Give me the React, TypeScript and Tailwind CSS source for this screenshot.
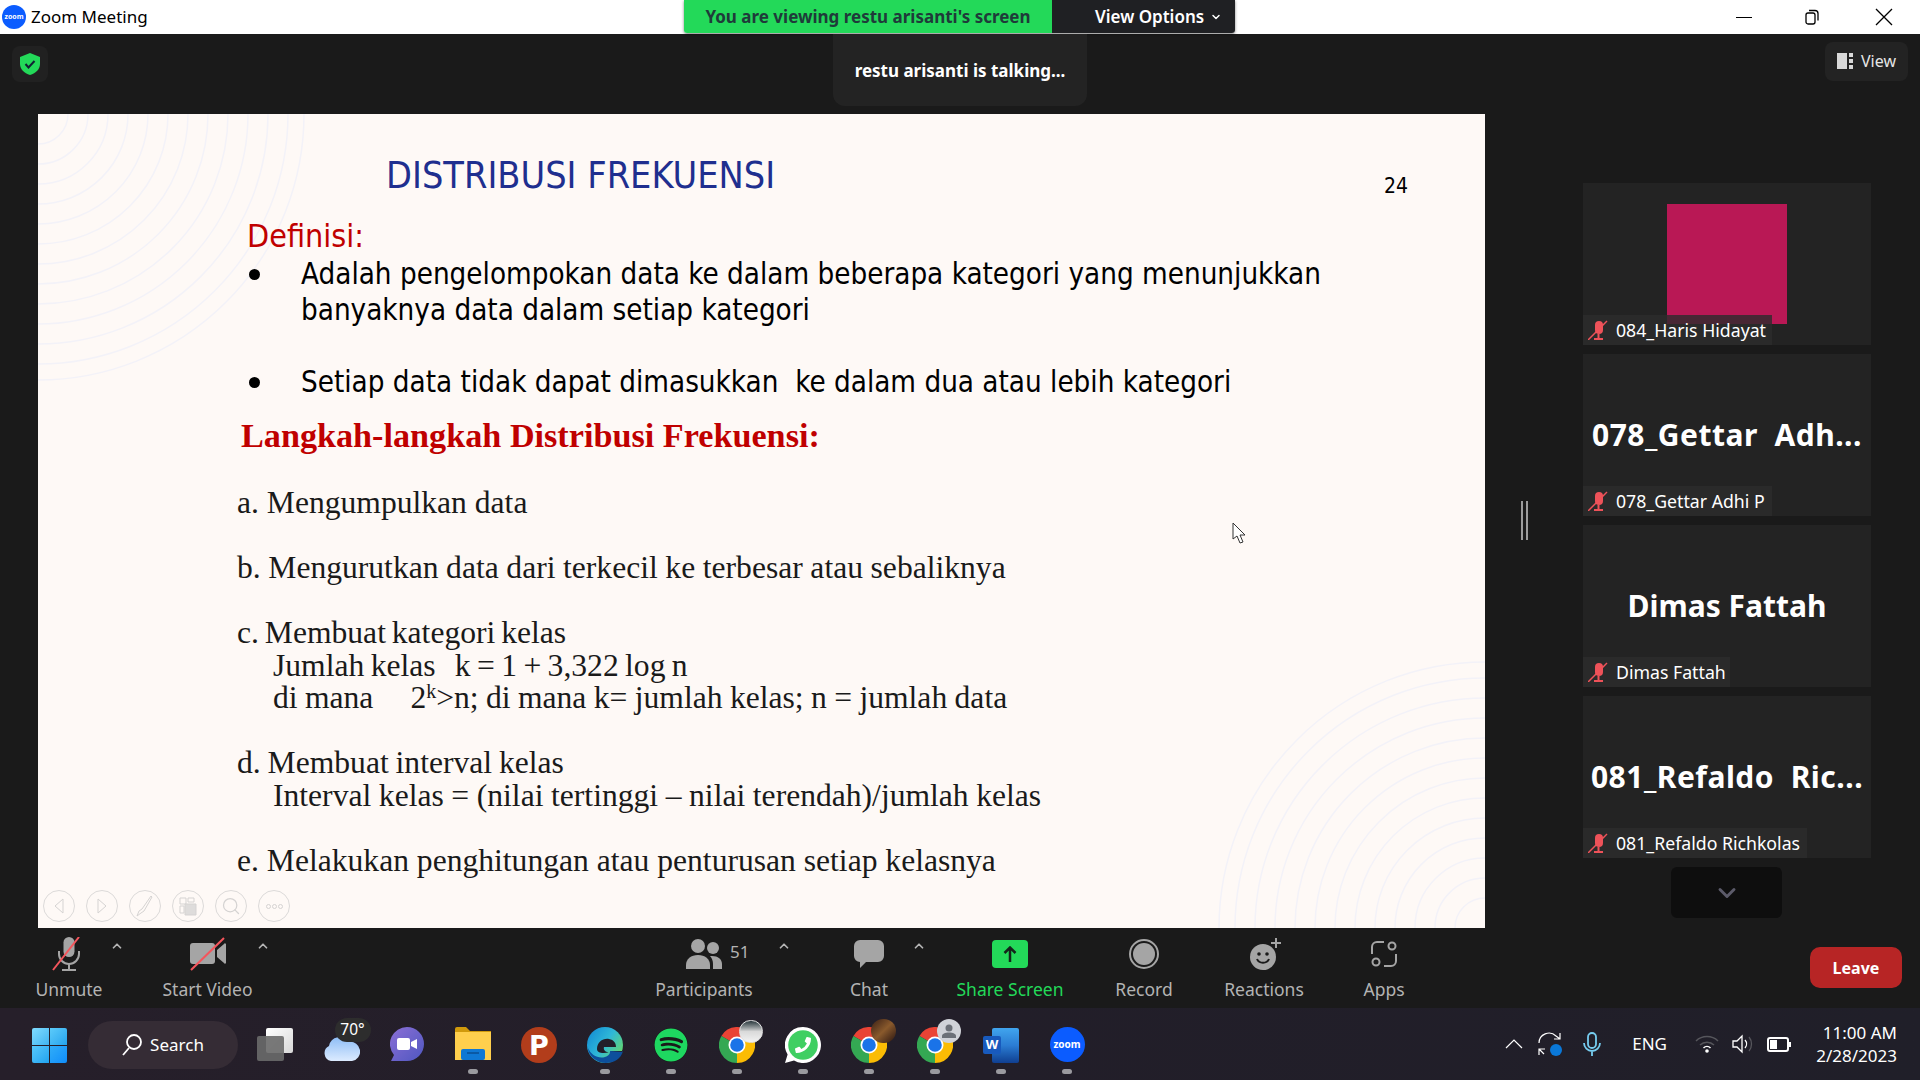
import React from "react";
import { FaSpotify, FaPhoneAlt } from "react-icons/fa";
import { ChevronDown, ChevronUp, Search } from "lucide-react";

const GRAY = "#a5a5a5";
const RED = "#f4555c";

const MutedMic = ({ size = 34 }: { size?: number }) => (
  <svg width={size} height={size} viewBox="0 0 34 34" fill="none">
    <rect x="11.5" y="0" width="11" height="20" rx="5.5" fill={GRAY} />
    <path d="M7 14v3a10 10 0 0 0 20 0v-3" stroke={GRAY} strokeWidth="2" />
    <path d="M17 27v5M10 33h14" stroke={GRAY} strokeWidth="2" />
    <path d="M1 33 27 0" stroke={RED} strokeWidth="2" />
  </svg>
);

const MutedVideo = () => (
  <svg width="36" height="34" viewBox="0 0 36 34" fill="none">
    <path d="M3 6h19a3 3 0 0 1 3 3v15a3 3 0 0 1-3 3H3a3 3 0 0 1-3-3V9a3 3 0 0 1 3-3Z" fill={GRAY} />
    <path d="m27 13 7-6a1 1 0 0 1 2 1v17a1 1 0 0 1-2 1l-7-6Z" fill={GRAY} />
    <path d="M1 33 34 1" stroke={RED} strokeWidth="2" />
  </svg>
);

const Caret = () => <ChevronUp size={14} strokeWidth={3} color="#b4b4b4" />;

const ToolItem = ({
  label,
  className,
  green,
  children,
}: {
  label: string;
  className: string;
  green?: boolean;
  children: React.ReactNode;
}) => (
  <div className={`relative flex flex-col items-center pt-[9px] ${className}`}>
    <div className="h-[34px] flex items-center justify-center">{children}</div>
    <div className={`mt-[6px] text-[17.5px] leading-6 whitespace-nowrap ${green ? "text-[#23d959]" : "text-[#b3b3b3]"}`}>
      {label}
    </div>
  </div>
);

const Tile = ({ big, name, labelW, wide }: { big?: string; name: string; labelW: string; wide?: boolean }) => (
  <div className="relative h-[162px] w-[288px] bg-[#232323] flex items-center justify-center">
    {big ? (
      <span className={`text-[30px] font-bold text-white whitespace-pre leading-none ${wide ? "tracking-[0.5px]" : ""}`}>
        {big}
      </span>
    ) : (
      <div className="h-[120px] w-[120px] bg-[#b91855]" />
    )}
    <div className={`absolute left-0 bottom-0 h-[30px] flex items-center bg-[#2c2c2c]/80 ${labelW}`}>
      <svg className="ml-[5px] shrink-0" width="20" height="20" viewBox="0 0 20 20" fill="none">
        <rect x="7" y="1" width="8" height="13" rx="4" fill="#ee5259" />
        <path d="M6 19h9M10.500 14v5" stroke="#ee5259" strokeWidth="2" />
        <path d="M0 20 19 1" stroke="#ee5259" strokeWidth="1.500" />
      </svg>
      <span className="ml-[8px] text-[17.700px] text-white whitespace-nowrap">{name}</span>
    </div>
  </div>
);

const Chrome = () => (
  <svg width="36" height="36" viewBox="0 0 36 36">
    <path d="M18 18 2.400 9A18 18 0 0 1 33.600 9Z" fill="#ea4335" />
    <path d="M18 18 33.600 9A18 18 0 0 1 18 36Z" fill="#fbbc04" />
    <path d="M18 18 18 36A18 18 0 0 1 2.400 9Z" fill="#34a853" />
    <circle cx="18" cy="18" r="8.500" fill="#fff" />
    <circle cx="18" cy="18" r="6.800" fill="#1a73e8" />
  </svg>
);

const TaskIcon = ({ children, dot = true }: { children: React.ReactNode; dot?: boolean }) => (
  <div className="relative w-[66px] h-[72px] flex justify-center pt-[19px]">
    {children}
    {dot && <div className="absolute top-[61px] left-[28px] w-[10px] h-[5px] rounded-full bg-[#9a9a9f]" />}
  </div>
);

const SlideBtn = ({ children }: { children?: React.ReactNode }) => (
  <div className="w-[32px] h-[32px] rounded-full border border-[#dcdad9] flex items-center justify-center text-[#d5d3d2]">
    {children}
  </div>
);

const Arcs = ({ className }: { className: string }) => (
  <svg className={className} width="270" height="270" viewBox="0 0 270 270" fill="none" stroke="#f3f2f8" strokeWidth="1.500">
    {[30, 50, 70, 90, 110, 130, 150, 170, 190, 210, 230, 250, 266].map((r) => (
      <circle key={r} cx="0" cy="0" r={r} />
    ))}
  </svg>
);

const sans = "font-['DejaVu_Sans_Condensed','DejaVu_Sans',sans-serif]";
const serif = "font-['Liberation_Serif',serif]";

const Line = ({ className, children }: { className: string; children: React.ReactNode }) => (
  <p className={`${serif} text-[31.600px] leading-[32px] h-[32px] text-[#1a1a1a] whitespace-pre ${className}`}>{children}</p>
);

const Slide = () => (
  <div className="relative w-[1447px] h-[814px] bg-[#fef9f6] overflow-hidden">
    <Arcs className="absolute left-0 top-0" />
    <Arcs className="absolute right-0 bottom-0 rotate-180" />
    <div className="relative pl-[199px]">
      <h1 className={`${sans} ml-[149px] mt-[41px] text-[37.500px] leading-10 h-10 text-[#1f2f8f]`}>DISTRIBUSI FREKUENSI</h1>
      <p className={`${sans} ml-[10px] mt-[21px] text-[32px] leading-10 h-10 text-[#c00000]`}>Definisi:</p>
      <ul className={`${sans} text-[29.300px] leading-[36px] text-black`}>
        <li className="relative pl-[64px]">
          <span className="absolute left-[12px] top-[13px] w-[11px] h-[11px] rounded-full bg-black" />
          Adalah pengelompokan data ke dalam beberapa kategori yang menunjukkan
          <br />
          banyaknya data dalam setiap kategori
        </li>
        <li className="relative pl-[64px] mt-[36px] whitespace-pre">
          <span className="absolute left-[12px] top-[13px] w-[11px] h-[11px] rounded-full bg-black" />
          Setiap data tidak dapat dimasukkan  ke dalam dua atau lebih kategori
        </li>
      </ul>
      <h2 className={`${serif} ml-[4px] mt-[16px] text-[34.200px] leading-10 h-10 font-bold text-[#c00000]`}>
        Langkah-langkah Distribusi Frekuensi:
      </h2>
      <Line className="mt-[31px]">a. Mengumpulkan data</Line>
      <Line className="mt-[33px] [word-spacing:-0.3px]">b. Mengurutkan data dari terkecil ke terbesar atau sebaliknya</Line>
      <Line className="mt-[33px] [word-spacing:-2px]">c. Membuat kategori kelas</Line>
      <Line className="mt-[1px] ml-[36px] [word-spacing:-1.500px]">Jumlah kelas   k = 1 + 3,322 log n</Line>
      <Line className="ml-[36px] [word-spacing:-0.500px]">
        di mana     2<sup className="text-[20px]">k</sup>&gt;n; di mana k= jumlah kelas; n = jumlah data
      </Line>
      <Line className="mt-[33px] [word-spacing:-1px]">d. Membuat interval kelas</Line>
      <Line className="mt-[1px] ml-[36px] [word-spacing:-0.300px]">Interval kelas = (nilai tertinggi – nilai terendah)/jumlah kelas</Line>
      <Line className="mt-[33px]">e. Melakukan penghitungan atau penturusan setiap kelasnya</Line>
    </div>
    <span className={`${sans} absolute left-[1346px] top-[60px] text-[21px] leading-6 text-black`}>24</span>
    {/* slide show controls */}
    <div className="absolute left-[5px] top-[776px] flex gap-[11px]">
      <SlideBtn>
        <svg width="10" height="16" viewBox="0 0 10 16" fill="none" stroke="currentColor"><path d="M9 1 1 8l8 7Z" /></svg>
      </SlideBtn>
      <SlideBtn>
        <svg width="10" height="16" viewBox="0 0 10 16" fill="none" stroke="currentColor"><path d="m1 1 8 7-8 7Z" /></svg>
      </SlideBtn>
      <SlideBtn>
        <svg width="20" height="22" viewBox="0 0 20 22" fill="none" stroke="currentColor"><path d="M16 1 7 14l-3 2-2 5 4-3 3-2 8-14Z" /></svg>
      </SlideBtn>
      <SlideBtn>
        <svg width="20" height="20" viewBox="0 0 20 20" fill="none" stroke="currentColor"><path d="M2 2h6v6H2zM10 2h6v4h-6zM2 10h4v7H2z" /><path d="M7 8h11v11H7z" fill="#dedcdb" /></svg>
      </SlideBtn>
      <SlideBtn>
        <Search size={20} strokeWidth={1.500} />
      </SlideBtn>
      <SlideBtn>
        <span className="flex gap-px">
          <i className="w-[5px] h-[5px] rounded-full border border-current" />
          <i className="w-[5px] h-[5px] rounded-full border border-current" />
          <i className="w-[5px] h-[5px] rounded-full border border-current" />
        </span>
      </SlideBtn>
    </div>
    {/* mouse cursor */}
    <svg className="absolute left-[1194px] top-[408px]" width="14" height="22" viewBox="0 0 14 22">
      <path d="M1 1v16l4-3 3 7 3-1-3-7h5Z" fill="#fff" stroke="#333" />
    </svg>
  </div>
);

export default function App() {
  return (
    <div className="relative flex flex-col h-screen w-[1920px] overflow-hidden bg-[#1a1a1a] font-['Noto_Sans',sans-serif]">
      {/* Title bar */}
      <div className="flex h-[34px] bg-white shrink-0">
        <div className="w-[684px] flex items-center">
          <div className="ml-[2px] w-[24px] h-[24px] rounded-full bg-[#0b5cff] flex items-center justify-center text-[7px] font-bold text-white">
            zoom
          </div>
          <span className="ml-[5px] text-[17px] text-black">Zoom Meeting</span>
        </div>
        <div className="flex h-[33px] rounded-b-[3px] overflow-hidden shadow-[0_1px_3px_rgba(0,0,0,0.5)]">
          <div className="w-[368px] bg-[#23d959] flex items-center justify-center text-[17px] font-bold text-[#1f3b3a]">
            You are viewing restu arisanti's screen
          </div>
          <div className="w-[183px] bg-[#1f2023] flex items-center pl-[43px] text-[17px] font-semibold text-white">
            View Options
            <ChevronDown size={12} strokeWidth={3} className="ml-[6px]" />
          </div>
        </div>
        <div className="ml-auto mr-[27px] flex items-center">
          <div className="w-[16px] h-px bg-black" />
          <svg className="ml-[53px]" width="15" height="16" viewBox="0 0 15 16" fill="none" stroke="#000" strokeWidth="1.300">
            <rect x="1" y="4" width="9" height="11" rx="2" />
            <path d="M4 1.500h6a3 3 0 0 1 3 3v7" />
          </svg>
          <svg className="ml-[55px]" width="18" height="18" viewBox="0 0 18 18" stroke="#000" strokeWidth="1.300">
            <path d="m1 1 16 16M17 1 1 17" />
          </svg>
        </div>
      </div>

      {/* Main area */}
      <div className="relative flex flex-1 min-h-0">
        <div className="ml-[38px] mt-[80px]">
          <Slide />
        </div>
        <div className="ml-[36px] mt-[467px] h-[39px] w-[7px] flex justify-between self-start">
          <div className="w-[2px] bg-[#9c9c9c]" />
          <div className="w-[2px] bg-[#9c9c9c]" />
        </div>
        <div className="ml-[55px] mt-[149px] flex flex-col gap-[9px]">
          <Tile name="084_Haris Hidayat" labelW="w-[189px]" />
          <Tile big="078_Gettar  Adh..." wide name="078_Gettar Adhi P" labelW="w-[189px]" />
          <Tile big="Dimas Fattah" name="Dimas Fattah" labelW="w-[147px]" />
          <Tile big="081_Refaldo  Ric..." wide name="081_Refaldo Richkolas" labelW="w-[224px]" />
          <div className="ml-[88px] w-[111px] h-[51px] rounded-md bg-[#0e0e0e] flex items-center justify-center">
            <ChevronDown size={28} strokeWidth={2.500} color="#5c5b6a" />
          </div>
        </div>

        {/* Overlays */}
        <div className="absolute left-[12px] top-[12px] w-[36px] h-[36px] rounded-lg bg-[#212121] flex items-center justify-center">
          <svg width="20" height="22" viewBox="0 0 20 22">
            <path d="M10 0 20 4v7c0 5-4 9-10 11C4 20 0 16 0 11V4Z" fill="#23d959" />
            <path d="m5.500 11 3 3.500 6-6.500" fill="none" stroke="#123" strokeWidth="2" />
          </svg>
        </div>
        <div className="absolute left-[833px] top-0 w-[254px] h-[72px] pt-px rounded-b-xl bg-[#232323] flex items-center justify-center text-[17px] font-bold text-white">
          restu arisanti is talking...
        </div>
        <div className="absolute left-[1825px] top-[8px] w-[83px] h-[39px] pb-px rounded-lg bg-[#232323] flex items-center justify-center text-[16px] text-[#e6e6e6]">
          <svg className="mr-[8px]" width="16" height="16" viewBox="0 0 16 16" fill="#d9d9d9">
            <path d="M0 0h10v16H0zM12 0h4v4h-4zM12 6h4v4h-4zM12 12h4v4h-4z" />
          </svg>
          View
        </div>
      </div>

      {/* Meeting toolbar */}
      <div className="flex h-[80px] shrink-0 bg-[#1a1a1a]">
        <ToolItem label="Unmute" className="w-[138px]">
          <MutedMic />
          <span className="absolute left-[110px] top-[11px]"><Caret /></span>
        </ToolItem>
        <ToolItem label="Start Video" className="w-[139px]">
          <MutedVideo />
          <span className="absolute left-[118px] top-[11px]"><Caret /></span>
        </ToolItem>
        <ToolItem label="Participants" className="w-[140px] ml-[357px]">
          <svg width="36" height="30" viewBox="0 0 36 30" fill={GRAY}>
            <circle cx="12" cy="7" r="7" />
            <path d="M0 30v-4c0-6 5-10 12-10s12 4 12 10v4Z" />
            <circle cx="27" cy="9" r="6" />
            <path d="M26 17c6 0 10 3 10 8v5h-9v-5c0-3-1-6-3-8Z" />
          </svg>
          <span className="absolute left-[96px] top-[11px] text-[17px] text-[#b3b3b3]">51</span>
          <span className="absolute left-[143px] top-[11px]"><Caret /></span>
        </ToolItem>
        <ToolItem label="Chat" className="w-[150px] ml-[20px]">
          <svg width="30" height="28" viewBox="0 0 30 28" fill={GRAY}>
            <path d="M6 0h18a6 6 0 0 1 6 6v10a6 6 0 0 1-6 6H12l-6 6v-6a6 6 0 0 1-6-6V6a6 6 0 0 1 6-6Z" />
          </svg>
          <span className="absolute left-[118px] top-[11px]"><Caret /></span>
        </ToolItem>
        <ToolItem label="Share Screen" green className="w-[130px] ml-px">
          <div className="w-[36px] h-[28px] rounded-[4px] bg-[#23d959] flex items-center justify-center">
            <svg width="14" height="16" viewBox="0 0 14 16" fill="none" stroke="#14241b" strokeWidth="2.500">
              <path d="M7 16V2M1.500 7 7 1.500 12.500 7" />
            </svg>
          </div>
        </ToolItem>
        <ToolItem label="Record" className="w-[130px] ml-[4px]">
          <svg width="30" height="30" viewBox="0 0 30 30">
            <circle cx="15" cy="15" r="14" fill="none" stroke={GRAY} strokeWidth="2" />
            <circle cx="15" cy="15" r="11" fill={GRAY} />
          </svg>
        </ToolItem>
        <ToolItem label="Reactions" className="w-[110px]">
          <svg className="ml-[3px]" width="32" height="32" viewBox="0 0 32 32">
            <circle cx="13" cy="19" r="13" fill={GRAY} />
            <circle cx="9" cy="16" r="1.800" fill="#1a1a1a" />
            <circle cx="17" cy="16" r="1.800" fill="#1a1a1a" />
            <path d="M7 21c2 5 10 5 12 0" fill="none" stroke="#1a1a1a" strokeWidth="2" />
            <path d="M26 0v10M21 5h10" stroke={GRAY} strokeWidth="2" />
          </svg>
        </ToolItem>
        <ToolItem label="Apps" className="w-[130px]">
          <svg width="26" height="26" viewBox="0 0 26 26" fill="none" stroke={GRAY} strokeWidth="2">
            <path d="M1 13V6a5 5 0 0 1 5-5h7M25 13v7a5 5 0 0 1-5 5h-7" />
            <circle cx="21" cy="5" r="3.500" />
            <circle cx="5" cy="21" r="3.500" />
          </svg>
        </ToolItem>
        <div className="ml-auto mr-[18px] mt-[19px] w-[92px] h-[41px] rounded-[10px] bg-[#b72525] flex items-center justify-center text-[16px] font-bold text-white">
          Leave
        </div>
      </div>

      {/* Windows taskbar */}
      <div className="flex h-[72px] shrink-0 bg-gradient-to-r from-[#261f2a] via-[#221e29] to-[#201f29] text-white">
        <div className="ml-[32px] mt-[20px] w-[35px] h-[35px] grid grid-cols-2 gap-[1.500px]">
          <div className="bg-gradient-to-br from-[#7fdcff] to-[#3fb4f0] rounded-tl-[2px]" />
          <div className="bg-gradient-to-br from-[#5ccbfa] to-[#22a4ee] rounded-tr-[2px]" />
          <div className="bg-gradient-to-br from-[#55c8fb] to-[#1fa3f0] rounded-bl-[2px]" />
          <div className="bg-gradient-to-br from-[#30adf8] to-[#0f8dfa] rounded-br-[2px]" />
        </div>
        <div className="ml-[21px] mt-[13px] w-[150px] h-[48px] rounded-full bg-[#352c35] flex items-center justify-center text-[17px]">
          <svg className="mr-[8px]" width="20" height="22" viewBox="0 0 20 22" fill="none" stroke="#fff" strokeWidth="1.800">
            <circle cx="12" cy="8" r="7" />
            <path d="M7 14 1 21" />
          </svg>
          Search
        </div>
        <div className="ml-[4px] flex">
          <TaskIcon dot={false}>
            <div className="relative w-[36px] h-[33px] mt-[1px]">
              <div className="absolute right-0 top-0 w-[27px] h-[25px] rounded-[2px] bg-gradient-to-br from-white to-[#d8d8d8]" />
              <div className="absolute left-0 bottom-0 w-[27px] h-[25px] rounded-[2px] bg-[#6a6a6a]/90" />
            </div>
          </TaskIcon>
          <TaskIcon dot={false}>
            <div className="relative w-[37px] h-[36px]">
              <svg className="absolute left-0 top-[8px]" width="37" height="26" viewBox="0 0 37 26">
                <defs>
                  <linearGradient id="cl" x1="0" y1="0" x2="0" y2="1">
                    <stop offset="0" stopColor="#8ebdf5" />
                    <stop offset="1" stopColor="#dcebff" />
                  </linearGradient>
                </defs>
                <path d="M8 26a8 8 0 0 1-2-15 11 11 0 0 1 20-4 9 9 0 0 1 3 19Z" fill="url(#cl)" />
              </svg>
              <div className="absolute left-[12px] -top-[9px] w-[36px] h-[24px] rounded-full bg-[#2d2d2d] flex items-center justify-center text-[15.500px]">
                70°
              </div>
            </div>
          </TaskIcon>
          <TaskIcon dot={false}>
            <svg width="34" height="35" viewBox="0 0 34 35">
              <defs>
                <linearGradient id="tm" x1="0" y1="0" x2="1" y2="1">
                  <stop offset="0" stopColor="#8b6fd6" />
                  <stop offset="1" stopColor="#4f57c0" />
                </linearGradient>
              </defs>
              <path d="M17 0a17 17 0 1 1 0 34H1l3-6A17 17 0 0 1 17 0Z" fill="url(#tm)" />
              <rect x="7" y="11" width="13" height="12" rx="2" fill="#fff" />
              <path d="m21 15 6-3v10l-6-3Z" fill="#fff" />
            </svg>
          </TaskIcon>
          <TaskIcon>
            <svg width="36" height="33" viewBox="0 0 36 33">
              <path d="M0 2a2 2 0 0 1 2-2h9l4 4h21v6H0Z" fill="#d19a0c" />
              <path d="M0 5h36v28H0Z" fill="#ffcf4d" />
              <rect x="6" y="22" width="24" height="11" rx="2" fill="#0f78d4" />
              <path d="M12 26h12" stroke="#0a4f95" strokeWidth="1.500" />
            </svg>
          </TaskIcon>
          <TaskIcon dot={false}>
            <div className="w-[36px] h-[36px] rounded-full bg-[#b23d1b] flex items-center justify-center text-[27px] leading-none font-bold text-white font-['DejaVu_Sans',sans-serif]">
              P
            </div>
          </TaskIcon>
          <TaskIcon>
            <svg width="36" height="36" viewBox="0 0 36 36">
              <defs>
                <linearGradient id="ed" x1="0" y1="0" x2="1" y2="0.700">
                  <stop offset="0" stopColor="#0f86d4" />
                  <stop offset="0.550" stopColor="#2fb8d8" />
                  <stop offset="1" stopColor="#66d86a" />
                </linearGradient>
              </defs>
              <circle cx="18" cy="18" r="18" fill="url(#ed)" />
              <path d="M36 24c-2 8-9 12-17 12C9 36 1 28 1 21c3 7 10 11 17 9 6-2 5-6 5-6h13Z" fill="#0d4f9c" />
              <path d="M10 22c0-7 6-11 12-10 5 1 7 4 7 8H17c-1 3 2 6 6 5l13-1-1 1H23c-7 2-13 1-13-3Z" fill="#221e29" />
            </svg>
          </TaskIcon>
          <TaskIcon>
            <FaSpotify size={34} color="#1ed760" className="rounded-full bg-[#1a1a1a] mt-[1px]" />
          </TaskIcon>
          <TaskIcon>
            <div className="relative">
              <Chrome />
              <div className="absolute left-[20px] -top-[7px] w-[24px] h-[23px] rounded-full bg-gradient-to-b from-[#2c3a3f] via-[#d9d9d9] to-[#f2f2f2] border border-[#e2e2e2]" />
            </div>
          </TaskIcon>
          <TaskIcon>
            <div className="relative w-[36px] h-[36px]">
              <svg width="36" height="36" viewBox="0 0 36 36">
                <path d="M18 0a18 18 0 1 1-9 33.600L0 36l2.600-8.600A18 18 0 0 1 18 0Z" fill="#fff" />
                <circle cx="18" cy="18" r="14.800" fill="#3fcf62" />
              </svg>
              <FaPhoneAlt size={16} color="#fff" className="absolute left-[10px] top-[10px] -scale-x-100" />
            </div>
          </TaskIcon>
          <TaskIcon>
            <div className="relative">
              <Chrome />
              <div className="absolute left-[20px] -top-[8px] w-[25px] h-[24px] rounded-full bg-gradient-to-br from-[#3a2015] via-[#8a5a2c] to-[#2a1610]" />
            </div>
          </TaskIcon>
          <TaskIcon>
            <div className="relative">
              <Chrome />
              <div className="absolute left-[20px] -top-[8px] w-[24px] h-[24px] rounded-full bg-[#d0d2d8] flex items-center justify-center">
                <svg width="14" height="14" viewBox="0 0 14 14" fill="#6c7078">
                  <circle cx="7" cy="4" r="3.500" />
                  <path d="M0 14v-2c0-2 3-3.500 7-3.500s7 1.500 7 3.500v2Z" />
                </svg>
              </div>
            </div>
          </TaskIcon>
          <TaskIcon>
            <div className="relative w-[36px] h-[36px]">
              <div className="absolute right-0 top-[1px] w-[27px] h-[35px] rounded-[2px] bg-gradient-to-b from-[#41a5ee] via-[#2b7cd3] to-[#103f91]" />
              <div className="absolute left-0 top-[9px] w-[18px] h-[18px] rounded-[2px] bg-[#185abd] flex items-center justify-center text-[13px] font-bold text-white">
                W
              </div>
            </div>
          </TaskIcon>
          <TaskIcon>
            <div className="w-[35px] h-[35px] rounded-full bg-[#0b5cff] flex items-center justify-center text-[10px] font-bold text-white">
              zoom
            </div>
          </TaskIcon>
        </div>

        {/* System tray */}
        <div className="ml-auto mr-[23px] flex items-center">
          <svg width="18" height="10" viewBox="0 0 18 10" fill="none" stroke="#fff" strokeWidth="1.200">
            <path d="m1 9 8-8 8 8" />
          </svg>
          <div className="relative ml-[15px] w-[24px] h-[24px]">
            <svg width="24" height="24" viewBox="0 0 24 24" fill="none" stroke="#fff" strokeWidth="1.200">
              <path d="M1 11a10 10 0 0 1 17-7l4 3M22 1v6h-6M1 17l5 5M1 23v-6h6" />
            </svg>
            <div className="absolute right-0 bottom-0 w-[12px] h-[12px] rounded-full bg-[#0a78d8]" />
          </div>
          <svg className="ml-[21px]" width="18" height="24" viewBox="0 0 18 24" fill="none" stroke="#76cdf0" strokeWidth="1.800">
            <rect x="5" y="1" width="8" height="15" rx="4" />
            <path d="M1 11a8 8 0 0 0 16 0M9 19v5" />
          </svg>
          <span className="ml-[31px] text-[17px]">ENG</span>
          <svg className="ml-[28px]" width="24" height="18" viewBox="0 0 24 18" fill="none" stroke="#56565c" strokeWidth="1.500">
            <path d="M1 6a16 16 0 0 1 22 0M5 10a10 10 0 0 1 14 0" />
            <path d="M8.500 13a5 5 0 0 1 7 0" stroke="#fff" />
            <circle cx="12" cy="16" r="1.800" fill="#fff" stroke="none" />
          </svg>
          <svg className="ml-[13px]" width="24" height="20" viewBox="0 0 24 20" fill="none" stroke="#fff" strokeWidth="1.300">
            <path d="M1 7v6h4l5 5V2L5 7Z" />
            <path d="M13 6a6 6 0 0 1 0 8" />
            <path d="M17 3a11 11 0 0 1 0 14" stroke="#56565c" />
          </svg>
          <div className="ml-[11px] w-[22px] h-[15px] rounded-[3px] border-2 border-white p-px">
            <div className="w-[7px] h-full bg-white" />
          </div>
          <div className="w-[2px] h-[5px] bg-white" />
          <div className="ml-[6px] w-[100px] text-right text-[17px] leading-[23px]">
            <div className="whitespace-nowrap">11:00 AM</div>
            <div className="whitespace-nowrap">2/28/2023</div>
          </div>
        </div>
      </div>
    </div>
  );
}
